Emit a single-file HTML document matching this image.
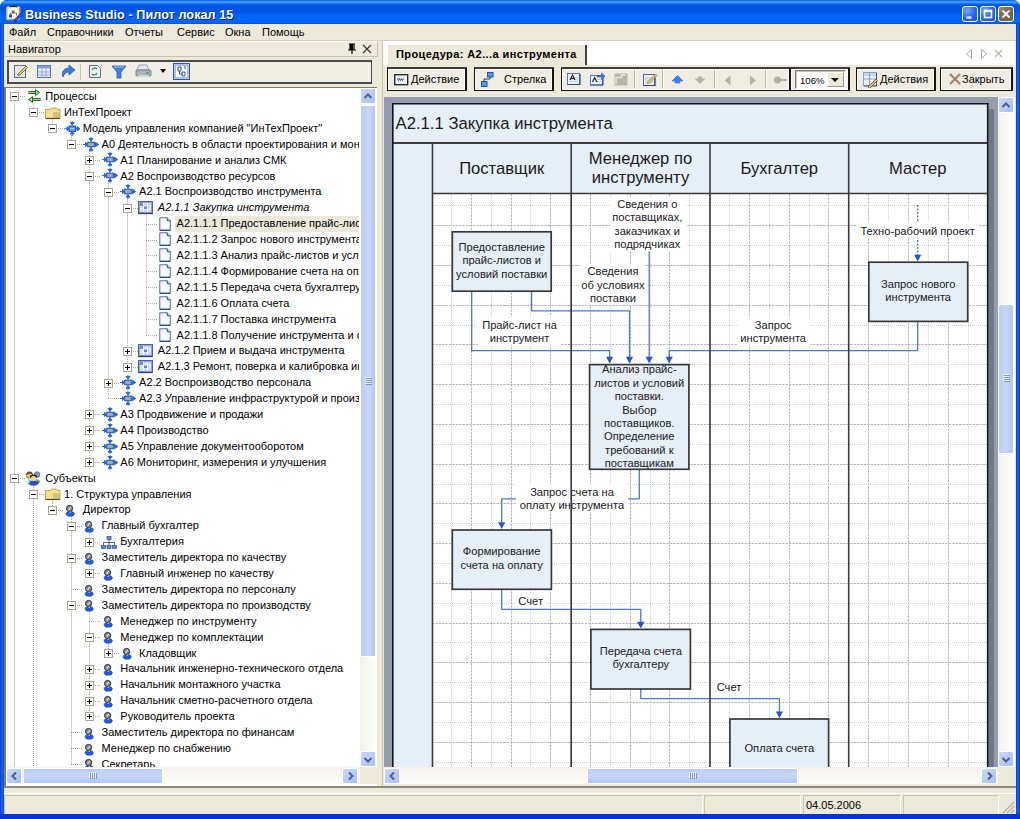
<!DOCTYPE html><html><head><meta charset="utf-8"><style>
*{margin:0;padding:0;box-sizing:border-box}
html,body{width:1020px;height:819px;overflow:hidden;background:#FFFFFF;font-family:"Liberation Sans",sans-serif;font-size:11px;color:#000}
.a{position:absolute}
.t{position:absolute;white-space:nowrap;line-height:13px}
</style></head><body>
<div class="a" style="left:0;top:0;width:1020px;height:819px;background:#0846D8;border-radius:7px 7px 0 0"></div>
<div class="a" style="left:0;top:0;width:1020px;height:25px;border-radius:7px 7px 0 0;background:linear-gradient(#0050E0 0px,#3C96FF 1.2px,#3C96FF 2.8px,#0A62F0 4px,#0054E0 6px,#0056E4 11px,#0062F2 15px,#0068FA 19px,#0066F8 22.5px,#0048D8 24px,#0040C8 25px)"></div>
<div class="t" style="left:25px;top:7.5px;font-size:12.6px;letter-spacing:0.08px;font-weight:bold;color:#fff;line-height:15px;text-shadow:1px 1px 0 #0A1E80">Business Studio - Пилот локал 15</div>
<svg class="a" style="left:5px;top:5px" width="18" height="18"><rect x="2" y="2" width="12.5" height="12.5" rx="1" fill="#FFFDF2" stroke="#E8C868" stroke-width="1.6"/><path d="M14.5 3v11.5H3" stroke="#A88A40" stroke-width=".8" fill="none"/><path d="M4.5 1.5h8" stroke="#303028" stroke-width="1.4"/><path d="M5.5 3h6" stroke="#FFFFFF" stroke-width="1"/><rect x="7" y="5.5" width="2.5" height="2.5" fill="#6A5E48"/><path d="M5.5 10V8h6v2.5" stroke="#6A6A60" fill="none" stroke-width=".9"/><rect x="4" y="9.5" width="3" height="3" fill="#0A4AE8"/><path d="M8.5 17L17 8.5" stroke="#0A2AC8" stroke-width="2.6"/><path d="M9 16.5L16.5 9" stroke="#FFFFFF" stroke-width=".8" stroke-dasharray="1 1"/></svg>
<div class="a" style="left:962px;top:6px;width:16px;height:16px;border:1px solid #fff;border-radius:3px;background:radial-gradient(circle at 30% 25%,#7AA8F8,#2A64F0 55%,#1A50E0)"><svg class="a" style="left:0;top:0" width="14" height="14"><path d="M3.5 10.5h5" stroke="#fff" stroke-width="2.2"/></svg></div>
<div class="a" style="left:980px;top:6px;width:16px;height:16px;border:1px solid #fff;border-radius:3px;background:radial-gradient(circle at 30% 25%,#7AA8F8,#2A64F0 55%,#1A50E0)"><svg class="a" style="left:0;top:0" width="14" height="14"><rect x="3.5" y="3.5" width="7" height="7" fill="none" stroke="#fff" stroke-width="1.6"/><path d="M3.5 4h7" stroke="#fff" stroke-width="2"/></svg></div>
<div class="a" style="left:998px;top:6px;width:16px;height:16px;border:1px solid #fff;border-radius:3px;background:linear-gradient(135deg,#9A8A70,#7A6A55 40%,#6E604C)"><svg class="a" style="left:0;top:0" width="14" height="14"><path d="M3.5 3.5l7 7M10.5 3.5l-7 7" stroke="#fff" stroke-width="2"/></svg></div>
<div class="a" style="left:0;top:24px;width:4px;height:795px;background:linear-gradient(90deg,#0831D9,#166AEE 50%,#0846D8)"></div>
<div class="a" style="left:1016px;top:24px;width:4px;height:795px;background:linear-gradient(90deg,#0846D8,#166AEE 50%,#0831D9)"></div>
<div class="a" style="left:0;top:814px;width:1020px;height:5px;background:#0831D9"></div>
<div class="a" style="left:4px;top:24px;width:1012px;height:790px;background:#ECE9D8"></div>
<div class="t" style="left:9px;top:26px">Файл</div>
<div class="t" style="left:47px;top:26px">Справочники</div>
<div class="t" style="left:125px;top:26px">Отчеты</div>
<div class="t" style="left:177px;top:26px">Сервис</div>
<div class="t" style="left:225px;top:26px">Окна</div>
<div class="t" style="left:262px;top:26px">Помощь</div>
<div class="a" style="left:4px;top:40px;width:1012px;height:1px;background:#D8D2BD"></div>
<div class="a" style="left:4px;top:41px;width:374px;height:16px;background:#EEEBDC;border-top:1px solid #FBFAF5;border-bottom:1px solid #C9C4B0;border-right:1px solid #C9C4B0"></div>
<div class="t" style="left:8px;top:43px">Навигатор</div>
<svg class="a" style="left:346px;top:43px" width="30" height="12" viewBox="0 0 30 12"><path d="M3 1h6M4 1v6M8 1v6M2 7h8M6 7v4M5 1v6" stroke="#000" stroke-width="1.2" fill="none"/><rect x="5" y="1" width="2" height="6" fill="#000"/><path d="M17 2l8 8M25 2l-8 8" stroke="#333" stroke-width="1.1"/></svg>
<div class="a" style="left:7px;top:60px;width:365px;height:24px;border:2px solid #4A4A4A;border-width:2px 1px 2px 2px;background:#F1EFE5"></div>
<div class="a" style="left:80px;top:64px;width:1px;height:16px;background:#C5C2B2"></div>

<svg class="a" style="left:13px;top:63px" width="16" height="16" viewBox="0 0 16 16"><rect x="1.5" y="2.5" width="11" height="12" fill="#E8ECF6" stroke="#5A6E9A"/><path d="M5 11l8-8 1.5 1.5-8 8H5z" fill="#E8C860" stroke="#6A5A20" stroke-width=".8"/></svg>
<svg class="a" style="left:36px;top:64px" width="16" height="16" viewBox="0 0 16 16"><rect x="1.5" y="1.5" width="13" height="12" fill="#EEF2FA" stroke="#4A6CB0"/><rect x="1.5" y="1.5" width="13" height="3" fill="#7C9CDC"/><path d="M1.5 8h13M1.5 11h13M6 4.5v9M10 4.5v9" stroke="#8AA4D8"/></svg>
<svg class="a" style="left:60px;top:63px" width="16" height="16" viewBox="0 0 16 16"><path d="M3 14C1 9 4 5 9 5V2l6 5-6 5V9C6 9 4 11 3 14z" fill="#3C7EE0" stroke="#1E4EA8" stroke-width=".7"/></svg>
<svg class="a" style="left:88px;top:64px" width="14" height="15" viewBox="0 0 14 15"><path d="M1.5 1.5h8l3 3v9h-11z" fill="#EEF0F8" stroke="#5A6A90"/><path d="M4 6a3 3 0 0 1 5-1M9 9a3 3 0 0 1-5 1" stroke="#3A9A3A" stroke-width="1.4" fill="none"/></svg>
<svg class="a" style="left:111px;top:64px" width="16" height="16" viewBox="0 0 16 16"><path d="M1 2h14l-5 6v6H6V8z" fill="#3C80E8" stroke="#2A5CC0" stroke-width=".8"/><path d="M3 3h10" stroke="#A8C8F8"/></svg>
<svg class="a" style="left:135px;top:63px" width="17" height="16" viewBox="0 0 17 16"><path d="M4 2h8l2 5H2z" fill="#E4E8EE" stroke="#8890A0" stroke-width=".8"/><rect x="1" y="7" width="15" height="6" rx="1" fill="#A8B0BC" stroke="#6A7280" stroke-width=".8"/><rect x="3" y="12" width="11" height="2" fill="#D0D4DA"/><path d="M11 10h3" stroke="#40B040" stroke-width="1.5"/></svg>
<svg class="a" style="left:160px;top:69px" width="6" height="4" viewBox="0 0 6 4"><path d="M0 0h6L3 4z" fill="#000"/></svg>
<svg class="a" style="left:173px;top:63px" width="17" height="17" viewBox="0 0 17 17"><rect x="0.5" y="0.5" width="16" height="16" fill="#FFF" stroke="#2A58C8"/><rect x="2" y="2" width="13" height="13" fill="#FFFFFF" stroke="#5A84D8"/><path d="M5 4h3v4H5zM9 9h3v4H9zM6.5 8v3H9M12 3v3" stroke="#2A4EA8" stroke-width="1" fill="none"/></svg>

<div class="a" style="left:4px;top:87px;width:373px;height:700px;background:#fff;border-top:1px solid #857A62;border-left:2px solid #857A62"></div>
<div class="a" style="left:376px;top:88px;width:1px;height:698px;background:#FBFAF4"></div>
<div class="a" style="left:6px;top:88px;width:353px;height:679px;overflow:hidden">
<svg class="a" style="left:-6px;top:-88px" width="360" height="780"><g stroke="#ACA899" stroke-width="1" stroke-dasharray="1 1" fill="none"><path d="M14.5 96.4V770.0"/><path d="M33.5 103.4V112.3"/><path d="M52.5 119.3V128.2"/><path d="M71.5 135.2V144.1"/><path d="M89.5 151.1V462.1"/><path d="M108.5 182.9V398.5"/><path d="M127.5 198.8V366.7"/><path d="M146.5 214.7V334.9"/><path d="M33.5 485.0V770.0"/><path d="M52.5 500.9V509.8"/><path d="M71.5 516.8V764.2"/><path d="M89.5 532.7V541.6"/><path d="M89.5 564.5V573.4"/><path d="M89.5 612.2V716.5"/><path d="M108.5 644.0V652.9"/><path d="M14.0 96.5H25.8"/><path d="M33.0 112.5H44.5"/><path d="M52.0 128.5H63.3"/><path d="M71.0 144.5H82.0"/><path d="M89.0 160.5H100.8"/><path d="M89.0 176.5H100.8"/><path d="M108.0 192.5H119.5"/><path d="M127.0 208.5H138.3"/><path d="M146.0 224.5H157.1"/><path d="M146.0 240.5H157.1"/><path d="M146.0 255.5H157.1"/><path d="M146.0 271.5H157.1"/><path d="M146.0 287.5H157.1"/><path d="M146.0 303.5H157.1"/><path d="M146.0 319.5H157.1"/><path d="M146.0 335.5H157.1"/><path d="M127.0 351.5H138.3"/><path d="M127.0 367.5H138.3"/><path d="M108.0 383.5H119.5"/><path d="M108.0 398.5H119.5"/><path d="M89.0 414.5H100.8"/><path d="M89.0 430.5H100.8"/><path d="M89.0 446.5H100.8"/><path d="M89.0 462.5H100.8"/><path d="M14.0 478.5H25.8"/><path d="M33.0 494.5H44.5"/><path d="M52.0 510.5H63.3"/><path d="M71.0 526.5H82.0"/><path d="M89.0 542.5H100.8"/><path d="M71.0 558.5H82.0"/><path d="M89.0 573.5H100.8"/><path d="M71.0 589.5H82.0"/><path d="M71.0 605.5H82.0"/><path d="M89.0 621.5H100.8"/><path d="M89.0 637.5H100.8"/><path d="M108.0 653.5H119.5"/><path d="M89.0 669.5H100.8"/><path d="M89.0 685.5H100.8"/><path d="M89.0 701.5H100.8"/><path d="M89.0 716.5H100.8"/><path d="M71.0 732.5H82.0"/><path d="M71.0 748.5H82.0"/><path d="M71.0 764.5H82.0"/></g>
<rect x="10.5" y="92.5" width="8" height="8" fill="#fff" stroke="#A9A594"/>
<path d="M12 96.5h5" stroke="#000"/>
<rect x="29.5" y="108.5" width="8" height="8" fill="#fff" stroke="#A9A594"/>
<path d="M31 112.5h5" stroke="#000"/>
<rect x="48.5" y="124.5" width="8" height="8" fill="#fff" stroke="#A9A594"/>
<path d="M50 128.5h5" stroke="#000"/>
<rect x="67.5" y="140.5" width="8" height="8" fill="#fff" stroke="#A9A594"/>
<path d="M69 144.5h5" stroke="#000"/>
<rect x="85.5" y="156.5" width="8" height="8" fill="#fff" stroke="#A9A594"/>
<path d="M87 160.5h5" stroke="#000"/>
<path d="M89.5 158v5" stroke="#000"/>
<rect x="85.5" y="172.5" width="8" height="8" fill="#fff" stroke="#A9A594"/>
<path d="M87 176.5h5" stroke="#000"/>
<rect x="104.5" y="188.5" width="8" height="8" fill="#fff" stroke="#A9A594"/>
<path d="M106 192.5h5" stroke="#000"/>
<rect x="123.5" y="204.5" width="8" height="8" fill="#fff" stroke="#A9A594"/>
<path d="M125 208.5h5" stroke="#000"/>
<rect x="123.5" y="347.5" width="8" height="8" fill="#fff" stroke="#A9A594"/>
<path d="M125 351.5h5" stroke="#000"/>
<path d="M127.5 349v5" stroke="#000"/>
<rect x="123.5" y="363.5" width="8" height="8" fill="#fff" stroke="#A9A594"/>
<path d="M125 367.5h5" stroke="#000"/>
<path d="M127.5 365v5" stroke="#000"/>
<rect x="104.5" y="379.5" width="8" height="8" fill="#fff" stroke="#A9A594"/>
<path d="M106 383.5h5" stroke="#000"/>
<path d="M108.5 381v5" stroke="#000"/>
<rect x="85.5" y="410.5" width="8" height="8" fill="#fff" stroke="#A9A594"/>
<path d="M87 414.5h5" stroke="#000"/>
<path d="M89.5 412v5" stroke="#000"/>
<rect x="85.5" y="426.5" width="8" height="8" fill="#fff" stroke="#A9A594"/>
<path d="M87 430.5h5" stroke="#000"/>
<path d="M89.5 428v5" stroke="#000"/>
<rect x="85.5" y="442.5" width="8" height="8" fill="#fff" stroke="#A9A594"/>
<path d="M87 446.5h5" stroke="#000"/>
<path d="M89.5 444v5" stroke="#000"/>
<rect x="85.5" y="458.5" width="8" height="8" fill="#fff" stroke="#A9A594"/>
<path d="M87 462.5h5" stroke="#000"/>
<path d="M89.5 460v5" stroke="#000"/>
<rect x="10.5" y="474.5" width="8" height="8" fill="#fff" stroke="#A9A594"/>
<path d="M12 478.5h5" stroke="#000"/>
<rect x="29.5" y="490.5" width="8" height="8" fill="#fff" stroke="#A9A594"/>
<path d="M31 494.5h5" stroke="#000"/>
<rect x="48.5" y="506.5" width="8" height="8" fill="#fff" stroke="#A9A594"/>
<path d="M50 510.5h5" stroke="#000"/>
<rect x="67.5" y="522.5" width="8" height="8" fill="#fff" stroke="#A9A594"/>
<path d="M69 526.5h5" stroke="#000"/>
<rect x="85.5" y="538.5" width="8" height="8" fill="#fff" stroke="#A9A594"/>
<path d="M87 542.5h5" stroke="#000"/>
<path d="M89.5 540v5" stroke="#000"/>
<rect x="67.5" y="554.5" width="8" height="8" fill="#fff" stroke="#A9A594"/>
<path d="M69 558.5h5" stroke="#000"/>
<rect x="85.5" y="569.5" width="8" height="8" fill="#fff" stroke="#A9A594"/>
<path d="M87 573.5h5" stroke="#000"/>
<path d="M89.5 571v5" stroke="#000"/>
<rect x="67.5" y="601.5" width="8" height="8" fill="#fff" stroke="#A9A594"/>
<path d="M69 605.5h5" stroke="#000"/>
<rect x="85.5" y="633.5" width="8" height="8" fill="#fff" stroke="#A9A594"/>
<path d="M87 637.5h5" stroke="#000"/>
<rect x="104.5" y="649.5" width="8" height="8" fill="#fff" stroke="#A9A594"/>
<path d="M106 653.5h5" stroke="#000"/>
<path d="M108.5 651v5" stroke="#000"/>
<rect x="85.5" y="665.5" width="8" height="8" fill="#fff" stroke="#A9A594"/>
<path d="M87 669.5h5" stroke="#000"/>
<path d="M89.5 667v5" stroke="#000"/>
<rect x="85.5" y="681.5" width="8" height="8" fill="#fff" stroke="#A9A594"/>
<path d="M87 685.5h5" stroke="#000"/>
<path d="M89.5 683v5" stroke="#000"/>
<rect x="85.5" y="697.5" width="8" height="8" fill="#fff" stroke="#A9A594"/>
<path d="M87 701.5h5" stroke="#000"/>
<path d="M89.5 699v5" stroke="#000"/>
<rect x="85.5" y="712.5" width="8" height="8" fill="#fff" stroke="#A9A594"/>
<path d="M87 716.5h5" stroke="#000"/>
<path d="M89.5 714v5" stroke="#000"/>
<g transform="translate(27,89)"><path d="M1.5 3.5h9" stroke="#1E3A1E" stroke-width="3"/><path d="M1.5 3.5h9" stroke="#7CF07C" stroke-width="1.5"/><path d="M8.5 .5l4 3-4 3z" fill="#7CF07C" stroke="#1E3A1E" stroke-width=".8"/><path d="M4.5 10.5h9" stroke="#1E3A1E" stroke-width="3"/><path d="M4.5 10.5h9" stroke="#7CF07C" stroke-width="1.5"/><path d="M5.5 7.5l-4 3 4 3z" fill="#7CF07C" stroke="#1E3A1E" stroke-width=".8"/></g>
<g transform="translate(45,106)"><path d="M.5 3.5h5l1 -1.5h5l1 1.5h2.5v9H.5z" fill="#F6E08E" stroke="#B89A4A" stroke-width=".9"/><rect x="8" y="6" width="6.5" height="6" fill="#C8B478" opacity=".7"/><path d="M.5 12.5h14.5" stroke="#5A4A20" stroke-width="1.2"/></g>
<g transform="translate(64,121)"><rect x="5" y="5" width="6.5" height="5.5" fill="#5A90E8" stroke="#1A4AB0" stroke-width=".9"/><path d="M6 7.7h4.5" stroke="#C8DCF8"/><path d="M0 7.7h5M3 5.7l2.5 2-2.5 2zM11.5 7.7h2.5M13 5.5l3 2.2-3 2.2zM8.2 0v5M6.2 1.5l2 2.5 2-2.5zM8.2 10.5v4.5M6.2 13l2-2.5 2 2.5z" stroke="#1E6AF0" fill="#1E6AF0" stroke-width="1"/></g>
<g transform="translate(83,137)"><rect x="4.7" y="5.2" width="6.6" height="4.6" fill="#9AAAC4" stroke="#203C80" stroke-width=".9"/><path d="M0 7.5h4.5M2.5 5.5l2.5 2-2.5 2zM11.5 7.5h3M12.5 5.3l3.2 2.2-3.2 2.2zM8 0v5M6 1.5l2 2.5 2-2.5zM8 10v5M6 13.2l2-2.5 2 2.5z" stroke="#1E6AF0" fill="#1E6AF0" stroke-width="1"/></g>
<g transform="translate(102,152)"><rect x="4.7" y="5.2" width="6.6" height="4.6" fill="#9AAAC4" stroke="#203C80" stroke-width=".9"/><path d="M0 7.5h4.5M2.5 5.5l2.5 2-2.5 2zM11.5 7.5h3M12.5 5.3l3.2 2.2-3.2 2.2zM8 0v5M6 1.5l2 2.5 2-2.5zM8 10v5M6 13.2l2-2.5 2 2.5z" stroke="#1E6AF0" fill="#1E6AF0" stroke-width="1"/></g>
<g transform="translate(102,168)"><rect x="4.7" y="5.2" width="6.6" height="4.6" fill="#9AAAC4" stroke="#203C80" stroke-width=".9"/><path d="M0 7.5h4.5M2.5 5.5l2.5 2-2.5 2zM11.5 7.5h3M12.5 5.3l3.2 2.2-3.2 2.2zM8 0v5M6 1.5l2 2.5 2-2.5zM8 10v5M6 13.2l2-2.5 2 2.5z" stroke="#1E6AF0" fill="#1E6AF0" stroke-width="1"/></g>
<g transform="translate(120,184)"><rect x="4.7" y="5.2" width="6.6" height="4.6" fill="#9AAAC4" stroke="#203C80" stroke-width=".9"/><path d="M0 7.5h4.5M2.5 5.5l2.5 2-2.5 2zM11.5 7.5h3M12.5 5.3l3.2 2.2-3.2 2.2zM8 0v5M6 1.5l2 2.5 2-2.5zM8 10v5M6 13.2l2-2.5 2 2.5z" stroke="#1E6AF0" fill="#1E6AF0" stroke-width="1"/></g>
<g transform="translate(138,201)"><rect x=".5" y=".5" width="14" height="12" fill="#8EA6D4" stroke="#4A64A8"/><rect x="2" y="2" width="11" height="9" fill="#C8D6F0"/><path d="M2 5h11M2 8h11M5.5 2v9M9.5 2v9" stroke="#FFFFFF"/><rect x="2" y="2" width="3" height="3" fill="#6A8AD0"/><rect x="6" y="5.5" width="3" height="2.5" fill="#6A8AD0"/><path d="M.5 12.5h14" stroke="#2A3E80" stroke-width="1.3"/></g>
<g transform="translate(159,217)"><path d="M.8 .8h7.5l3 3v9.7H.8z" fill="#F8FAFE" stroke="#4A6CB8" stroke-width="1"/><path d="M8.3 .8v3h3" fill="#C8D4EE" stroke="#2A4A98"/><path d="M.8 13.3h10.5" stroke="#2A4A98" stroke-width="1.4"/></g>
<g transform="translate(159,232)"><path d="M.8 .8h7.5l3 3v9.7H.8z" fill="#F8FAFE" stroke="#4A6CB8" stroke-width="1"/><path d="M8.3 .8v3h3" fill="#C8D4EE" stroke="#2A4A98"/><path d="M.8 13.3h10.5" stroke="#2A4A98" stroke-width="1.4"/></g>
<g transform="translate(159,248)"><path d="M.8 .8h7.5l3 3v9.7H.8z" fill="#F8FAFE" stroke="#4A6CB8" stroke-width="1"/><path d="M8.3 .8v3h3" fill="#C8D4EE" stroke="#2A4A98"/><path d="M.8 13.3h10.5" stroke="#2A4A98" stroke-width="1.4"/></g>
<g transform="translate(159,264)"><path d="M.8 .8h7.5l3 3v9.7H.8z" fill="#F8FAFE" stroke="#4A6CB8" stroke-width="1"/><path d="M8.3 .8v3h3" fill="#C8D4EE" stroke="#2A4A98"/><path d="M.8 13.3h10.5" stroke="#2A4A98" stroke-width="1.4"/></g>
<g transform="translate(159,280)"><path d="M.8 .8h7.5l3 3v9.7H.8z" fill="#F8FAFE" stroke="#4A6CB8" stroke-width="1"/><path d="M8.3 .8v3h3" fill="#C8D4EE" stroke="#2A4A98"/><path d="M.8 13.3h10.5" stroke="#2A4A98" stroke-width="1.4"/></g>
<g transform="translate(159,296)"><path d="M.8 .8h7.5l3 3v9.7H.8z" fill="#F8FAFE" stroke="#4A6CB8" stroke-width="1"/><path d="M8.3 .8v3h3" fill="#C8D4EE" stroke="#2A4A98"/><path d="M.8 13.3h10.5" stroke="#2A4A98" stroke-width="1.4"/></g>
<g transform="translate(159,312)"><path d="M.8 .8h7.5l3 3v9.7H.8z" fill="#F8FAFE" stroke="#4A6CB8" stroke-width="1"/><path d="M8.3 .8v3h3" fill="#C8D4EE" stroke="#2A4A98"/><path d="M.8 13.3h10.5" stroke="#2A4A98" stroke-width="1.4"/></g>
<g transform="translate(159,328)"><path d="M.8 .8h7.5l3 3v9.7H.8z" fill="#F8FAFE" stroke="#4A6CB8" stroke-width="1"/><path d="M8.3 .8v3h3" fill="#C8D4EE" stroke="#2A4A98"/><path d="M.8 13.3h10.5" stroke="#2A4A98" stroke-width="1.4"/></g>
<g transform="translate(138,344)"><rect x=".5" y=".5" width="14" height="12" fill="#8EA6D4" stroke="#4A64A8"/><rect x="2" y="2" width="11" height="9" fill="#C8D6F0"/><path d="M2 5h11M2 8h11M5.5 2v9M9.5 2v9" stroke="#FFFFFF"/><rect x="2" y="2" width="3" height="3" fill="#6A8AD0"/><rect x="6" y="5.5" width="3" height="2.5" fill="#6A8AD0"/><path d="M.5 12.5h14" stroke="#2A3E80" stroke-width="1.3"/></g>
<g transform="translate(138,360)"><rect x=".5" y=".5" width="14" height="12" fill="#8EA6D4" stroke="#4A64A8"/><rect x="2" y="2" width="11" height="9" fill="#C8D6F0"/><path d="M2 5h11M2 8h11M5.5 2v9M9.5 2v9" stroke="#FFFFFF"/><rect x="2" y="2" width="3" height="3" fill="#6A8AD0"/><rect x="6" y="5.5" width="3" height="2.5" fill="#6A8AD0"/><path d="M.5 12.5h14" stroke="#2A3E80" stroke-width="1.3"/></g>
<g transform="translate(120,375)"><rect x="4.7" y="5.2" width="6.6" height="4.6" fill="#9AAAC4" stroke="#203C80" stroke-width=".9"/><path d="M0 7.5h4.5M2.5 5.5l2.5 2-2.5 2zM11.5 7.5h3M12.5 5.3l3.2 2.2-3.2 2.2zM8 0v5M6 1.5l2 2.5 2-2.5zM8 10v5M6 13.2l2-2.5 2 2.5z" stroke="#1E6AF0" fill="#1E6AF0" stroke-width="1"/></g>
<g transform="translate(120,391)"><rect x="4.7" y="5.2" width="6.6" height="4.6" fill="#9AAAC4" stroke="#203C80" stroke-width=".9"/><path d="M0 7.5h4.5M2.5 5.5l2.5 2-2.5 2zM11.5 7.5h3M12.5 5.3l3.2 2.2-3.2 2.2zM8 0v5M6 1.5l2 2.5 2-2.5zM8 10v5M6 13.2l2-2.5 2 2.5z" stroke="#1E6AF0" fill="#1E6AF0" stroke-width="1"/></g>
<g transform="translate(102,407)"><rect x="4.7" y="5.2" width="6.6" height="4.6" fill="#9AAAC4" stroke="#203C80" stroke-width=".9"/><path d="M0 7.5h4.5M2.5 5.5l2.5 2-2.5 2zM11.5 7.5h3M12.5 5.3l3.2 2.2-3.2 2.2zM8 0v5M6 1.5l2 2.5 2-2.5zM8 10v5M6 13.2l2-2.5 2 2.5z" stroke="#1E6AF0" fill="#1E6AF0" stroke-width="1"/></g>
<g transform="translate(102,423)"><rect x="4.7" y="5.2" width="6.6" height="4.6" fill="#9AAAC4" stroke="#203C80" stroke-width=".9"/><path d="M0 7.5h4.5M2.5 5.5l2.5 2-2.5 2zM11.5 7.5h3M12.5 5.3l3.2 2.2-3.2 2.2zM8 0v5M6 1.5l2 2.5 2-2.5zM8 10v5M6 13.2l2-2.5 2 2.5z" stroke="#1E6AF0" fill="#1E6AF0" stroke-width="1"/></g>
<g transform="translate(102,439)"><rect x="4.7" y="5.2" width="6.6" height="4.6" fill="#9AAAC4" stroke="#203C80" stroke-width=".9"/><path d="M0 7.5h4.5M2.5 5.5l2.5 2-2.5 2zM11.5 7.5h3M12.5 5.3l3.2 2.2-3.2 2.2zM8 0v5M6 1.5l2 2.5 2-2.5zM8 10v5M6 13.2l2-2.5 2 2.5z" stroke="#1E6AF0" fill="#1E6AF0" stroke-width="1"/></g>
<g transform="translate(102,455)"><rect x="4.7" y="5.2" width="6.6" height="4.6" fill="#9AAAC4" stroke="#203C80" stroke-width=".9"/><path d="M0 7.5h4.5M2.5 5.5l2.5 2-2.5 2zM11.5 7.5h3M12.5 5.3l3.2 2.2-3.2 2.2zM8 0v5M6 1.5l2 2.5 2-2.5zM8 10v5M6 13.2l2-2.5 2 2.5z" stroke="#1E6AF0" fill="#1E6AF0" stroke-width="1"/></g>
<g transform="translate(25,471)"><circle cx="4.5" cy="4" r="3.3" fill="#E8CC6A" stroke="#6A5A30" stroke-width=".7"/><path d="M2 3.5c.5-2 4-2.5 5-.5" stroke="#4A3A20" stroke-width="1.4" fill="none"/><circle cx="12" cy="3.6" r="2.8" fill="#6A9AE8" stroke="#2A58B8" stroke-width=".7"/><path d="M10.5 7.5l5 2.5-2 3z" fill="#A08A60"/><ellipse cx="8.5" cy="12" rx="4.6" ry="2.3" fill="#1E5AE0" stroke="#0A3AB0" stroke-width=".6"/><circle cx="8.5" cy="7" r="3" fill="#F6DC7A"/><path d="M5.5 6.5c0-3 6-3 6 0" stroke="#2A2418" stroke-width="1.6" fill="none"/><path d="M1.5 10.5l1 1M3.5 9l1 1M2.5 12.5l1 1M4 11l1 1M3 8l.8.8" stroke="#50D040" stroke-width="1"/></g>
<g transform="translate(45,487)"><path d="M.5 3.5h5l1 -1.5h5l1 1.5h2.5v9H.5z" fill="#F6E08E" stroke="#B89A4A" stroke-width=".9"/><rect x="8" y="6" width="6.5" height="6" fill="#C8B478" opacity=".7"/><path d="M.5 12.5h14.5" stroke="#5A4A20" stroke-width="1.2"/></g>
<g transform="translate(66,505)"><ellipse cx="4.2" cy="8.9" rx="4.1" ry="2.3" fill="#1E5AE8" stroke="#1840B0" stroke-width=".6"/><circle cx="3.6" cy="3.5" r="3.1" fill="#7E858C" stroke="#2A2E34" stroke-width="1"/><path d="M2.4 5.2l2.6-3.4" stroke="#E0E4E8" stroke-width="1.1"/><circle cx="4.2" cy="7.2" r=".7" fill="#F0E060"/></g>
<g transform="translate(85,521)"><ellipse cx="4.2" cy="8.9" rx="4.1" ry="2.3" fill="#1E5AE8" stroke="#1840B0" stroke-width=".6"/><circle cx="3.6" cy="3.5" r="3.1" fill="#7E858C" stroke="#2A2E34" stroke-width="1"/><path d="M2.4 5.2l2.6-3.4" stroke="#E0E4E8" stroke-width="1.1"/><circle cx="4.2" cy="7.2" r=".7" fill="#F0E060"/></g>
<g transform="translate(101,536)"><rect x="6" y=".5" width="4" height="3" fill="#5A8AE0" stroke="#2A4A98" stroke-width=".7"/><path d="M8 3.5v3M2.5 6.5h11M2.5 6.5v3M8 6.5v3M13.5 6.5v3" stroke="#3A3E44" stroke-width=".8" fill="none"/><rect x=".5" y="9.5" width="4" height="3" fill="#5A8AE0" stroke="#2A4A98" stroke-width=".7"/><rect x="6" y="9.5" width="4" height="3" fill="#5A8AE0" stroke="#2A4A98" stroke-width=".7"/><rect x="11.5" y="9.5" width="4" height="3" fill="#5A8AE0" stroke="#2A4A98" stroke-width=".7"/></g>
<g transform="translate(85,553)"><ellipse cx="4.2" cy="8.9" rx="4.1" ry="2.3" fill="#1E5AE8" stroke="#1840B0" stroke-width=".6"/><circle cx="3.6" cy="3.5" r="3.1" fill="#7E858C" stroke="#2A2E34" stroke-width="1"/><path d="M2.4 5.2l2.6-3.4" stroke="#E0E4E8" stroke-width="1.1"/><circle cx="4.2" cy="7.2" r=".7" fill="#F0E060"/></g>
<g transform="translate(104,569)"><ellipse cx="4.2" cy="8.9" rx="4.1" ry="2.3" fill="#1E5AE8" stroke="#1840B0" stroke-width=".6"/><circle cx="3.6" cy="3.5" r="3.1" fill="#7E858C" stroke="#2A2E34" stroke-width="1"/><path d="M2.4 5.2l2.6-3.4" stroke="#E0E4E8" stroke-width="1.1"/><circle cx="4.2" cy="7.2" r=".7" fill="#F0E060"/></g>
<g transform="translate(85,585)"><ellipse cx="4.2" cy="8.9" rx="4.1" ry="2.3" fill="#1E5AE8" stroke="#1840B0" stroke-width=".6"/><circle cx="3.6" cy="3.5" r="3.1" fill="#7E858C" stroke="#2A2E34" stroke-width="1"/><path d="M2.4 5.2l2.6-3.4" stroke="#E0E4E8" stroke-width="1.1"/><circle cx="4.2" cy="7.2" r=".7" fill="#F0E060"/></g>
<g transform="translate(85,600)"><ellipse cx="4.2" cy="8.9" rx="4.1" ry="2.3" fill="#1E5AE8" stroke="#1840B0" stroke-width=".6"/><circle cx="3.6" cy="3.5" r="3.1" fill="#7E858C" stroke="#2A2E34" stroke-width="1"/><path d="M2.4 5.2l2.6-3.4" stroke="#E0E4E8" stroke-width="1.1"/><circle cx="4.2" cy="7.2" r=".7" fill="#F0E060"/></g>
<g transform="translate(104,616)"><ellipse cx="4.2" cy="8.9" rx="4.1" ry="2.3" fill="#1E5AE8" stroke="#1840B0" stroke-width=".6"/><circle cx="3.6" cy="3.5" r="3.1" fill="#7E858C" stroke="#2A2E34" stroke-width="1"/><path d="M2.4 5.2l2.6-3.4" stroke="#E0E4E8" stroke-width="1.1"/><circle cx="4.2" cy="7.2" r=".7" fill="#F0E060"/></g>
<g transform="translate(104,632)"><ellipse cx="4.2" cy="8.9" rx="4.1" ry="2.3" fill="#1E5AE8" stroke="#1840B0" stroke-width=".6"/><circle cx="3.6" cy="3.5" r="3.1" fill="#7E858C" stroke="#2A2E34" stroke-width="1"/><path d="M2.4 5.2l2.6-3.4" stroke="#E0E4E8" stroke-width="1.1"/><circle cx="4.2" cy="7.2" r=".7" fill="#F0E060"/></g>
<g transform="translate(123,648)"><ellipse cx="4.2" cy="8.9" rx="4.1" ry="2.3" fill="#1E5AE8" stroke="#1840B0" stroke-width=".6"/><circle cx="3.6" cy="3.5" r="3.1" fill="#7E858C" stroke="#2A2E34" stroke-width="1"/><path d="M2.4 5.2l2.6-3.4" stroke="#E0E4E8" stroke-width="1.1"/><circle cx="4.2" cy="7.2" r=".7" fill="#F0E060"/></g>
<g transform="translate(104,664)"><ellipse cx="4.2" cy="8.9" rx="4.1" ry="2.3" fill="#1E5AE8" stroke="#1840B0" stroke-width=".6"/><circle cx="3.6" cy="3.5" r="3.1" fill="#7E858C" stroke="#2A2E34" stroke-width="1"/><path d="M2.4 5.2l2.6-3.4" stroke="#E0E4E8" stroke-width="1.1"/><circle cx="4.2" cy="7.2" r=".7" fill="#F0E060"/></g>
<g transform="translate(104,680)"><ellipse cx="4.2" cy="8.9" rx="4.1" ry="2.3" fill="#1E5AE8" stroke="#1840B0" stroke-width=".6"/><circle cx="3.6" cy="3.5" r="3.1" fill="#7E858C" stroke="#2A2E34" stroke-width="1"/><path d="M2.4 5.2l2.6-3.4" stroke="#E0E4E8" stroke-width="1.1"/><circle cx="4.2" cy="7.2" r=".7" fill="#F0E060"/></g>
<g transform="translate(104,696)"><ellipse cx="4.2" cy="8.9" rx="4.1" ry="2.3" fill="#1E5AE8" stroke="#1840B0" stroke-width=".6"/><circle cx="3.6" cy="3.5" r="3.1" fill="#7E858C" stroke="#2A2E34" stroke-width="1"/><path d="M2.4 5.2l2.6-3.4" stroke="#E0E4E8" stroke-width="1.1"/><circle cx="4.2" cy="7.2" r=".7" fill="#F0E060"/></g>
<g transform="translate(104,712)"><ellipse cx="4.2" cy="8.9" rx="4.1" ry="2.3" fill="#1E5AE8" stroke="#1840B0" stroke-width=".6"/><circle cx="3.6" cy="3.5" r="3.1" fill="#7E858C" stroke="#2A2E34" stroke-width="1"/><path d="M2.4 5.2l2.6-3.4" stroke="#E0E4E8" stroke-width="1.1"/><circle cx="4.2" cy="7.2" r=".7" fill="#F0E060"/></g>
<g transform="translate(85,728)"><ellipse cx="4.2" cy="8.9" rx="4.1" ry="2.3" fill="#1E5AE8" stroke="#1840B0" stroke-width=".6"/><circle cx="3.6" cy="3.5" r="3.1" fill="#7E858C" stroke="#2A2E34" stroke-width="1"/><path d="M2.4 5.2l2.6-3.4" stroke="#E0E4E8" stroke-width="1.1"/><circle cx="4.2" cy="7.2" r=".7" fill="#F0E060"/></g>
<g transform="translate(85,744)"><ellipse cx="4.2" cy="8.9" rx="4.1" ry="2.3" fill="#1E5AE8" stroke="#1840B0" stroke-width=".6"/><circle cx="3.6" cy="3.5" r="3.1" fill="#7E858C" stroke="#2A2E34" stroke-width="1"/><path d="M2.4 5.2l2.6-3.4" stroke="#E0E4E8" stroke-width="1.1"/><circle cx="4.2" cy="7.2" r=".7" fill="#F0E060"/></g>
<g transform="translate(85,759)"><ellipse cx="4.2" cy="8.9" rx="4.1" ry="2.3" fill="#1E5AE8" stroke="#1840B0" stroke-width=".6"/><circle cx="3.6" cy="3.5" r="3.1" fill="#7E858C" stroke="#2A2E34" stroke-width="1"/><path d="M2.4 5.2l2.6-3.4" stroke="#E0E4E8" stroke-width="1.1"/><circle cx="4.2" cy="7.2" r=".7" fill="#F0E060"/></g>
</svg>
<div class="a" style="left:168.6px;top:127.6px;width:200px;height:16px;background:#EBE8DA"></div>
<div class="t" style="left:39.30px;top:2.00px;">Процессы</div>
<div class="t" style="left:58.05px;top:17.90px;">ИнТехПроект</div>
<div class="t" style="left:76.80px;top:33.80px;">Модель управления компанией &quot;ИнТехПроект&quot;</div>
<div class="t" style="left:95.55px;top:49.70px;">А0 Деятельность в области проектирования и мон</div>
<div class="t" style="left:114.30px;top:65.60px;">А1 Планирование и анализ СМК</div>
<div class="t" style="left:114.30px;top:81.50px;">А2 Воспроизводство ресурсов</div>
<div class="t" style="left:133.05px;top:97.40px;">А2.1 Воспроизводство инструмента</div>
<div class="t" style="left:151.80px;top:113.30px;font-style:italic;">А2.1.1 Закупка инструмента</div>
<div class="t" style="left:170.55px;top:129.20px;">А2.1.1.1 Предоставление прайс-листов и условий поставки</div>
<div class="t" style="left:170.55px;top:145.10px;">А2.1.1.2 Запрос нового инструмента</div>
<div class="t" style="left:170.55px;top:161.00px;">А2.1.1.3 Анализ прайс-листов и условий поставки</div>
<div class="t" style="left:170.55px;top:176.90px;">А2.1.1.4 Формирование счета на оплату</div>
<div class="t" style="left:170.55px;top:192.80px;">А2.1.1.5 Передача счета бухгалтеру</div>
<div class="t" style="left:170.55px;top:208.70px;">А2.1.1.6 Оплата счета</div>
<div class="t" style="left:170.55px;top:224.60px;">А2.1.1.7 Поставка инструмента</div>
<div class="t" style="left:170.55px;top:240.50px;">А2.1.1.8 Получение инструмента и сдача на склад</div>
<div class="t" style="left:151.80px;top:256.40px;">А2.1.2 Прием и выдача инструмента</div>
<div class="t" style="left:151.80px;top:272.30px;">А2.1.3 Ремонт, поверка и калибровка инструмента</div>
<div class="t" style="left:133.05px;top:288.20px;">А2.2 Воспроизводство персонала</div>
<div class="t" style="left:133.05px;top:304.10px;">А2.3 Управление инфраструктурой и производственной средой</div>
<div class="t" style="left:114.30px;top:320.00px;">А3 Продвижение и продажи</div>
<div class="t" style="left:114.30px;top:335.90px;">А4 Производство</div>
<div class="t" style="left:114.30px;top:351.80px;">А5 Управление документооборотом</div>
<div class="t" style="left:114.30px;top:367.70px;">А6 Мониторинг, измерения и улучшения</div>
<div class="t" style="left:39.30px;top:383.60px;">Субъекты</div>
<div class="t" style="left:58.05px;top:399.50px;">1. Структура управления</div>
<div class="t" style="left:76.80px;top:415.40px;">Директор</div>
<div class="t" style="left:95.55px;top:431.30px;">Главный бухгалтер</div>
<div class="t" style="left:114.30px;top:447.20px;">Бухгалтерия</div>
<div class="t" style="left:95.55px;top:463.10px;">Заместитель директора по качеству</div>
<div class="t" style="left:114.30px;top:479.00px;">Главный инженер по качеству</div>
<div class="t" style="left:95.55px;top:494.90px;">Заместитель директора по персоналу</div>
<div class="t" style="left:95.55px;top:510.80px;">Заместитель директора по производству</div>
<div class="t" style="left:114.30px;top:526.70px;">Менеджер по инструменту</div>
<div class="t" style="left:114.30px;top:542.60px;">Менеджер по комплектации</div>
<div class="t" style="left:133.05px;top:558.50px;">Кладовщик</div>
<div class="t" style="left:114.30px;top:574.40px;">Начальник инженерно-технического отдела</div>
<div class="t" style="left:114.30px;top:590.30px;">Начальник монтажного участка</div>
<div class="t" style="left:114.30px;top:606.20px;">Начальник сметно-расчетного отдела</div>
<div class="t" style="left:114.30px;top:622.10px;">Руководитель проекта</div>
<div class="t" style="left:95.55px;top:638.00px;">Заместитель директора по финансам</div>
<div class="t" style="left:95.55px;top:653.90px;">Менеджер по снабжению</div>
<div class="t" style="left:95.55px;top:669.80px;">Секретарь</div>
</div>
<div class="a" style="left:360px;top:88px;width:16px;height:679px;background:linear-gradient(90deg,#F3F1EC,#FEFEFB)"></div>
<div class="a" style="left:360px;top:88px;width:16px;height:16px;border:1px solid #FFFFFF;border-radius:2px;background:linear-gradient(135deg,#C8D8FC,#B4CAF8 60%,#A6BEF4)"><svg class="a" style="left:0;top:0" width="14" height="14" viewBox="0 0 14 14"><path d="M3.5 9l3.5-3.5 3.5 3.5" stroke="#4D6185" stroke-width="2" fill="none"/></svg></div>
<div class="a" style="left:360px;top:105px;width:16px;height:552px;border:1px solid #FFFFFF;border-radius:2px;background:linear-gradient(90deg,#BACCF6,#C6D6FA 50%,#B2C6F4)"></div>
<svg class="a" style="left:365px;top:377px" width="7" height="9"><path d="M0 .5h6M0 2.5h6M0 4.5h6M0 6.5h6" stroke="#EEF4FF"/><path d="M1 1.5h6M1 3.5h6M1 5.5h6M1 7.5h6" stroke="#7C94D0"/></svg>
<div class="a" style="left:360px;top:751px;width:16px;height:16px;border:1px solid #FFFFFF;border-radius:2px;background:linear-gradient(135deg,#C8D8FC,#B4CAF8 60%,#A6BEF4)"><svg class="a" style="left:0;top:0" width="14" height="14" viewBox="0 0 14 14"><path d="M3.5 6l3.5 3.5 3.5-3.5" stroke="#4D6185" stroke-width="2" fill="none"/></svg></div>
<div class="a" style="left:6px;top:767px;width:354px;height:17px;background:linear-gradient(#F3F1EC,#FEFEFB)"></div>
<div class="a" style="left:6px;top:768px;width:16px;height:16px;border:1px solid #FFFFFF;border-radius:2px;background:linear-gradient(135deg,#C8D8FC,#B4CAF8 60%,#A6BEF4)"><svg class="a" style="left:0;top:0" width="14" height="14" viewBox="0 0 14 14"><path d="M9 3.5l-3.5 3.5 3.5 3.5" stroke="#4D6185" stroke-width="2" fill="none"/></svg></div>
<div class="a" style="left:23px;top:768px;width:140px;height:16px;border:1px solid #FFFFFF;border-radius:2px;background:linear-gradient(#BACCF6,#C6D6FA 50%,#B2C6F4)"></div>
<svg class="a" style="left:89px;top:772px" width="9" height="7"><path d="M.5 0v6M2.5 0v6M4.5 0v6M6.5 0v6" stroke="#EEF4FF"/><path d="M1.5 1v6M3.5 1v6M5.5 1v6M7.5 1v6" stroke="#7C94D0"/></svg>
<div class="a" style="left:342px;top:768px;width:16px;height:16px;border:1px solid #FFFFFF;border-radius:2px;background:linear-gradient(135deg,#C8D8FC,#B4CAF8 60%,#A6BEF4)"><svg class="a" style="left:0;top:0" width="14" height="14" viewBox="0 0 14 14"><path d="M6 3.5l3.5 3.5-3.5 3.5" stroke="#4D6185" stroke-width="2" fill="none"/></svg></div>
<div class="a" style="left:360px;top:767px;width:17px;height:17px;background:#ECE9D8"></div>
<div class="a" style="left:378px;top:41px;width:5px;height:746px;background:#ECE9D8"></div>
<div class="a" style="left:382px;top:41px;width:1px;height:746px;background:#C9C4B0"></div>
<div class="a" style="left:383px;top:41px;width:633px;height:24px;background:#FFFFFF;border-left:1px solid #F7F6F0"></div>
<div class="a" style="left:388px;top:45px;width:199px;height:20px;background:#ECE9D8;border-right:2px solid #404040"></div>
<div class="t" style="left:396px;top:48px;font-weight:bold;letter-spacing:0.4px">Процедура: А2...а инструмента</div>
<svg class="a" style="left:963px;top:47px" width="40" height="14"><path d="M8.5 2.5v9l-5-4.5z" fill="none" stroke="#ACA89C"/><path d="M18.5 2.5v9l5-4.5z" fill="none" stroke="#ACA89C"/><path d="M32 3l7 7M39 3l-7 7" stroke="#B4B0A4" stroke-width="1.1"/></svg>
<div class="a" style="left:383px;top:65px;width:633px;height:32px;background:#ECE9D8"></div>
<div class="a" style="left:387px;top:67px;width:80px;height:24px;border:1px solid #141414;border-top:2px solid #3E3E3E;border-right-width:2px;background:#EFEDE3;box-shadow:inset 1px 1px 0 #FCFCF8,inset -1px -1px 0 #FCFCF8"></div>
<div class="a" style="left:474px;top:67px;width:80px;height:24px;border:1px solid #141414;border-top:2px solid #3E3E3E;border-right-width:2px;background:#EFEDE3;box-shadow:inset 1px 1px 0 #FCFCF8,inset -1px -1px 0 #FCFCF8"></div>
<div class="a" style="left:561px;top:67px;width:230px;height:24px;border:1px solid #141414;border-top:2px solid #3E3E3E;border-right-width:2px;background:#EFEDE3;box-shadow:inset 1px 1px 0 #FCFCF8,inset -1px -1px 0 #FCFCF8"></div>
<div class="a" style="left:790px;top:67px;width:60px;height:24px;border:1px solid #141414;border-top:2px solid #3E3E3E;border-right-width:2px;background:#EFEDE3;box-shadow:inset 1px 1px 0 #FCFCF8,inset -1px -1px 0 #FCFCF8"></div>
<div class="a" style="left:856px;top:67px;width:80px;height:24px;border:1px solid #141414;border-top:2px solid #3E3E3E;border-right-width:2px;background:#EFEDE3;box-shadow:inset 1px 1px 0 #FCFCF8,inset -1px -1px 0 #FCFCF8"></div>
<div class="a" style="left:940px;top:67px;width:73px;height:24px;border:1px solid #141414;border-top:2px solid #3E3E3E;border-right-width:2px;background:#EFEDE3;box-shadow:inset 1px 1px 0 #FCFCF8,inset -1px -1px 0 #FCFCF8"></div>
<div class="t" style="left:411px;top:73px">Действие</div>
<div class="t" style="left:504px;top:73px">Стрелка</div>
<div class="t" style="left:880px;top:73px">Действия</div>
<div class="t" style="left:962px;top:73px">Закрыть</div>
<svg class="a" style="left:394px;top:74px" width="15" height="12"><rect x=".7" y=".7" width="13" height="10" fill="#E8EEFA" stroke="#202020" stroke-width="1.3"/><path d="M3.5 4.5l1 2 1-2 1 2 1-2 1 2 1-2" stroke="#404040" fill="none" stroke-width=".9"/></svg>
<svg class="a" style="left:480px;top:71px" width="16" height="17"><rect x="7.5" y="1.5" width="5.5" height="4.5" fill="#5A94F0" stroke="#2050B8"/><rect x="1.5" y="10.5" width="5.5" height="5" fill="#5A94F0" stroke="#2050B8"/><path d="M4 10.5V8h6V6" stroke="#303848" fill="none"/></svg>
<svg class="a" style="left:561px;top:68px" width="230" height="22" viewBox="561 68 230 22"><rect x="567.5" y="73.5" width="12" height="11" fill="#EEF2FA" stroke="#5A78B8"/><path d="M569 77.5h9M569 79.5h9M569 81.5h9" stroke="#C8D2E8"/><path d="M567.5 84.5h12.5M580 74v11" stroke="#2A4A98" stroke-width="1.2"/><path d="M570 80l2.5-5 2.5 5M571 78.5h3" stroke="#202020" stroke-width="1.1" fill="none"/><rect x="590.5" y="75.5" width="12" height="9.5" fill="#EEF2FA" stroke="#5A78B8"/><path d="M592 79.5h9M592 81.5h9" stroke="#C8D2E8"/><path d="M590.5 85h12.5M603 76v9" stroke="#2A4A98" stroke-width="1.2"/><path d="M592.5 82l2.2-4.5 2.2 4.5" stroke="#202020" stroke-width="1.1" fill="none"/><path d="M597 75.5h4.5V73l3.5 3.2-3.5 3.2V77H597z" fill="#3A7AF0" stroke="#1E50C0" stroke-width=".6"/><rect x="614.5" y="73.5" width="13" height="12" fill="#B8B6AA"/><path d="M616 84V77.5h5.5V75H626" stroke="#E4E2D8" stroke-width="1.6" fill="none"/><path d="M634.5 70v18" stroke="#B8B4A4"/><path d="M635.5 70v18" stroke="#FFFFFF"/><rect x="643.5" y="74.5" width="11" height="11" fill="#F0F2F8" stroke="#4A64A8"/><path d="M645 78h8M645 80h8M645 82h8" stroke="#B8C4E0"/><path d="M643.5 85.5h11.5M655 75v11" stroke="#2A3E80" stroke-width="1.2"/><path d="M648 81.5l7.5-7.5 1.5 1.5-7.5 7.5-2 .5z" fill="#E8D070" stroke="#7A6A30" stroke-width=".7"/><path d="M662.5 70v18" stroke="#B8B4A4"/><path d="M663.5 70v18" stroke="#FFFFFF"/><path d="M677.5 75.5l5.5 5.5h-3.2v2h-4.6v-2H672z" fill="#3A82F2" stroke="#1E5AD0" stroke-width=".6"/><path d="M700 84l5.5-5.5h-3.2v-2h-4.6v2H694.5z" fill="#B4B2A6"/><path d="M714.5 70v18" stroke="#B8B4A4"/><path d="M715.5 70v18" stroke="#FFFFFF"/><path d="M730.5 75.5v10l-6-5z" fill="#B4B2A6"/><path d="M750 75.5v10l6-5z" fill="#B4B2A6"/><path d="M765.5 70v18" stroke="#B8B4A4"/><path d="M766.5 70v18" stroke="#FFFFFF"/><path d="M775 80h12" stroke="#B4B2A6" stroke-width="2"/><circle cx="777.5" cy="80" r="3.6" fill="#B4B2A6"/></svg>
<div class="a" style="left:795px;top:70px;width:51px;height:19px;background:#fff;border:1px solid #7F7D70;border-right-color:#FFFFFF;border-bottom-color:#FFFFFF;box-shadow:inset 1px 1px 0 #C8C4B4"></div>
<div class="t" style="left:800px;top:74.5px;font-size:9.6px;line-height:11px">106%</div>
<div class="a" style="left:827px;top:72px;width:17px;height:15px;background:#ECE9D8;border:1px solid #FFFFFF;border-right-color:#9A9888;border-bottom-color:#9A9888"></div>
<svg class="a" style="left:831px;top:78px" width="8" height="4"><path d="M0 0h8L4 4z" fill="#000"/></svg>
<svg class="a" style="left:863px;top:72px" width="16" height="16"><rect x=".5" y=".5" width="13" height="13" fill="#EEF2FC" stroke="#8AA0D0"/><rect x="1" y="1" width="12" height="3" fill="#C8D6F4"/><path d="M.5 7h13M6.5 .5v13" stroke="#8AA0D0"/><path d="M13.5 1v13H1" stroke="#3A4E90" fill="none"/><path d="M5 15l8-8 1.5 1.5-8 8z" fill="#E0C860" stroke="#5A5020" stroke-width=".8"/></svg>
<svg class="a" style="left:948px;top:72px" width="14" height="14"><path d="M2 2l10 10M12 2L2 12" stroke="#A08468" stroke-width="2.2"/></svg>
<div class="a" style="left:384px;top:97px;width:614px;height:670px;background:#939CB0;overflow:hidden"><svg class="a" style="left:0;top:0" width="614" height="670" viewBox="384 97 614 670"><rect x="384" y="97" width="614" height="670" fill="#939CB0"/><rect x="988.5" y="109" width="5.5" height="660" fill="#6E7888"/><rect x="393" y="104" width="595" height="670" fill="#E6EEF8"/><rect x="432" y="194" width="556" height="580" fill="#FFFFFF"/><g stroke-width="1" fill="none"><path d="M451.5 194V770" stroke="#D0D0D0" stroke-dasharray="1 1"/><path d="M471.5 194V770" stroke="#B4B4B4" stroke-dasharray="2.3 1.1"/><path d="M491.5 194V770" stroke="#D0D0D0" stroke-dasharray="1 1"/><path d="M511.5 194V770" stroke="#B4B4B4" stroke-dasharray="2.3 1.1"/><path d="M530.5 194V770" stroke="#D0D0D0" stroke-dasharray="1 1"/><path d="M550.5 194V770" stroke="#B4B4B4" stroke-dasharray="2.3 1.1"/><path d="M570.5 194V770" stroke="#D0D0D0" stroke-dasharray="1 1"/><path d="M590.5 194V770" stroke="#B4B4B4" stroke-dasharray="2.3 1.1"/><path d="M610.5 194V770" stroke="#D0D0D0" stroke-dasharray="1 1"/><path d="M630.5 194V770" stroke="#B4B4B4" stroke-dasharray="2.3 1.1"/><path d="M650.5 194V770" stroke="#D0D0D0" stroke-dasharray="1 1"/><path d="M669.5 194V770" stroke="#B4B4B4" stroke-dasharray="2.3 1.1"/><path d="M689.5 194V770" stroke="#D0D0D0" stroke-dasharray="1 1"/><path d="M709.5 194V770" stroke="#B4B4B4" stroke-dasharray="2.3 1.1"/><path d="M729.5 194V770" stroke="#D0D0D0" stroke-dasharray="1 1"/><path d="M749.5 194V770" stroke="#B4B4B4" stroke-dasharray="2.3 1.1"/><path d="M769.5 194V770" stroke="#D0D0D0" stroke-dasharray="1 1"/><path d="M789.5 194V770" stroke="#B4B4B4" stroke-dasharray="2.3 1.1"/><path d="M809.5 194V770" stroke="#D0D0D0" stroke-dasharray="1 1"/><path d="M828.5 194V770" stroke="#B4B4B4" stroke-dasharray="2.3 1.1"/><path d="M848.5 194V770" stroke="#D0D0D0" stroke-dasharray="1 1"/><path d="M868.5 194V770" stroke="#B4B4B4" stroke-dasharray="2.3 1.1"/><path d="M888.5 194V770" stroke="#D0D0D0" stroke-dasharray="1 1"/><path d="M908.5 194V770" stroke="#B4B4B4" stroke-dasharray="2.3 1.1"/><path d="M928.5 194V770" stroke="#D0D0D0" stroke-dasharray="1 1"/><path d="M948.5 194V770" stroke="#B4B4B4" stroke-dasharray="2.3 1.1"/><path d="M968.5 194V770" stroke="#D0D0D0" stroke-dasharray="1 1"/><path d="M432 205.5H988" stroke="#D0D0D0" stroke-dasharray="1 1"/><path d="M432 225.5H988" stroke="#B4B4B4" stroke-dasharray="2.3 1.1"/><path d="M432 245.5H988" stroke="#D0D0D0" stroke-dasharray="1 1"/><path d="M432 265.5H988" stroke="#B4B4B4" stroke-dasharray="2.3 1.1"/><path d="M432 285.5H988" stroke="#D0D0D0" stroke-dasharray="1 1"/><path d="M432 305.5H988" stroke="#B4B4B4" stroke-dasharray="2.3 1.1"/><path d="M432 325.5H988" stroke="#D0D0D0" stroke-dasharray="1 1"/><path d="M432 344.5H988" stroke="#B4B4B4" stroke-dasharray="2.3 1.1"/><path d="M432 364.5H988" stroke="#D0D0D0" stroke-dasharray="1 1"/><path d="M432 384.5H988" stroke="#B4B4B4" stroke-dasharray="2.3 1.1"/><path d="M432 404.5H988" stroke="#D0D0D0" stroke-dasharray="1 1"/><path d="M432 424.5H988" stroke="#B4B4B4" stroke-dasharray="2.3 1.1"/><path d="M432 444.5H988" stroke="#D0D0D0" stroke-dasharray="1 1"/><path d="M432 464.5H988" stroke="#B4B4B4" stroke-dasharray="2.3 1.1"/><path d="M432 484.5H988" stroke="#D0D0D0" stroke-dasharray="1 1"/><path d="M432 503.5H988" stroke="#B4B4B4" stroke-dasharray="2.3 1.1"/><path d="M432 523.5H988" stroke="#D0D0D0" stroke-dasharray="1 1"/><path d="M432 543.5H988" stroke="#B4B4B4" stroke-dasharray="2.3 1.1"/><path d="M432 563.5H988" stroke="#D0D0D0" stroke-dasharray="1 1"/><path d="M432 583.5H988" stroke="#B4B4B4" stroke-dasharray="2.3 1.1"/><path d="M432 603.5H988" stroke="#D0D0D0" stroke-dasharray="1 1"/><path d="M432 623.5H988" stroke="#B4B4B4" stroke-dasharray="2.3 1.1"/><path d="M432 642.5H988" stroke="#D0D0D0" stroke-dasharray="1 1"/><path d="M432 662.5H988" stroke="#B4B4B4" stroke-dasharray="2.3 1.1"/><path d="M432 682.5H988" stroke="#D0D0D0" stroke-dasharray="1 1"/><path d="M432 702.5H988" stroke="#B4B4B4" stroke-dasharray="2.3 1.1"/><path d="M432 722.5H988" stroke="#D0D0D0" stroke-dasharray="1 1"/><path d="M432 742.5H988" stroke="#B4B4B4" stroke-dasharray="2.3 1.1"/><path d="M432 762.5H988" stroke="#D0D0D0" stroke-dasharray="1 1"/></g><text x="395.5" y="128.5" font-size="16.7" font-family="Liberation Sans" fill="#1A1A1A">А2.1.1 Закупка инструмента</text><g font-size="16.6" font-family="Liberation Sans" fill="#1A1A1A" text-anchor="middle"><text x="501.7" y="173.5">Поставщик</text><text x="640.5" y="163.5">Менеджер по</text><text x="640.5" y="183">инструменту</text><text x="779.3" y="173.5">Бухгалтер</text><text x="917.8" y="173.5">Мастер</text></g><path d="M471.7 291 L471.7 350.7 L609.6 350.7 L609.6 358" stroke="#4A78D8" stroke-width="1.3" fill="none" stroke-linejoin="round"/><path d="M531.6 291 L531.6 310.8 L629.5 310.8 L629.5 358" stroke="#4A78D8" stroke-width="1.3" fill="none" stroke-linejoin="round"/><path d="M649.2 251.5 L649.2 358" stroke="#4A78D8" stroke-width="1.3" fill="none" stroke-linejoin="round"/><path d="M917.7 321 L917.7 350.7 L669.2 350.7 L669.2 358" stroke="#4A78D8" stroke-width="1.3" fill="none" stroke-linejoin="round"/><path d="M917.7 205V256" stroke="#4A78D8" stroke-width="1.3" stroke-dasharray="2 1.5"/><path d="M639.3 469 L639.3 498.8 L501.7 498.8 L501.7 523" stroke="#4A78D8" stroke-width="1.3" fill="none" stroke-linejoin="round"/><path d="M501.7 589 L501.7 609.3 L640.8 609.3 L640.8 622" stroke="#4A78D8" stroke-width="1.3" fill="none" stroke-linejoin="round"/><path d="M640.8 689 L640.8 698.6 L779.4 698.6 L779.4 712" stroke="#4A78D8" stroke-width="1.3" fill="none" stroke-linejoin="round"/><rect x="610" y="197" width="76" height="54" fill="#fff"/><rect x="580" y="264" width="66" height="41" fill="#fff"/><rect x="478" y="317" width="83" height="28" fill="#fff"/><rect x="738" y="317" width="72" height="28" fill="#fff"/><rect x="856" y="222" width="122" height="16" fill="#fff"/><rect x="516" y="484" width="112" height="28" fill="#fff"/><rect x="516" y="594" width="30" height="14" fill="#fff"/><rect x="714" y="680" width="30" height="14" fill="#fff"/><g stroke="#3A3A3A" fill="none"><path d="M393 103.8H988.5" stroke-width="1.6" stroke="#141414"/><path d="M393 143H988" stroke-width="1.8"/><path d="M432 193.5H988" stroke-width="1.6"/><path d="M392.8 103V770M987.7 103V770" stroke-width="1.6" stroke="#141414"/><path d="M432.5 143V770" stroke-width="1.6"/><path d="M571.2 143V770" stroke-width="1.6"/><path d="M710 143V770" stroke-width="1.6"/><path d="M848.7 143V770" stroke-width="1.6"/></g><path d="M606.0 356.8L613.2 356.8L609.6 363.6z" fill="#2456D6"/><path d="M625.9 356.8L633.1 356.8L629.5 363.6z" fill="#2456D6"/><path d="M645.6 356.8L652.8000000000001 356.8L649.2 363.6z" fill="#2456D6"/><path d="M665.6 356.8L672.8000000000001 356.8L669.2 363.6z" fill="#2456D6"/><path d="M914.1 254.7L921.3000000000001 254.7L917.7 261.5z" fill="#2456D6"/><path d="M498.09999999999997 522.2L505.3 522.2L501.7 529z" fill="#2456D6"/><path d="M637.1999999999999 621.7L644.4 621.7L640.8 628.5z" fill="#2456D6"/><path d="M775.8 711.4000000000001L783.0 711.4000000000001L779.4 718.2z" fill="#2456D6"/><g font-size="11.15" font-family="Liberation Sans" fill="#202020" text-anchor="middle"><text x="647.3" y="207.5">Сведения о</text><text x="647.3" y="221.2">поставщиках,</text><text x="647.3" y="234.6">заказчиках и</text><text x="647.3" y="248">подрядчиках</text><text x="613" y="275.3">Сведения</text><text x="613" y="288.7">об условиях</text><text x="613" y="302.1">поставки</text><text x="519.5" y="328.5">Прайс-лист на</text><text x="519.5" y="341.9">инструмент</text><text x="773.2" y="328.5">Запрос</text><text x="773.2" y="341.9">инструмента</text><text x="917.7" y="234.6">Техно-рабочий проект</text><text x="572" y="496">Запрос счета на</text><text x="572" y="509.4">оплату инструмента</text><text x="530.7" y="605">Счет</text><text x="729" y="691.3">Счет</text></g><rect x="452.3" y="231.8" width="98.9" height="59.4" fill="#E6EEF8" stroke="#383838" stroke-width="1.7"/><g font-size="11.15" font-family="Liberation Sans" fill="#202020" text-anchor="middle"><text x="501.7" y="250.8">Предоставление</text><text x="501.7" y="264.2">прайс-листов и</text><text x="501.7" y="277.6">условий поставки</text></g><rect x="868.8" y="262.2" width="98.9" height="59.2" fill="#E6EEF8" stroke="#383838" stroke-width="1.7"/><g font-size="11.15" font-family="Liberation Sans" fill="#202020" text-anchor="middle"><text x="918.2" y="287.8">Запрос нового</text><text x="918.2" y="301.4">инструмента</text></g><rect x="589.6" y="364.6" width="99.3" height="104.7" fill="#E6EEF8" stroke="#383838" stroke-width="1.7"/><g font-size="11.15" font-family="Liberation Sans" fill="#202020" text-anchor="middle"><text x="639.3" y="373.4">Анализ прайс-</text><text x="639.3" y="386.8">листов и условий</text><text x="639.3" y="400.2">поставки.</text><text x="639.3" y="413.6">Выбор</text><text x="639.3" y="427">поставщиков.</text><text x="639.3" y="440.4">Определение</text><text x="639.3" y="453.8">требований к</text><text x="639.3" y="467.2">поставщикам</text></g><rect x="452.3" y="530" width="99.1" height="59.3" fill="#E6EEF8" stroke="#383838" stroke-width="1.7"/><g font-size="11.15" font-family="Liberation Sans" fill="#202020" text-anchor="middle"><text x="501.7" y="555.2">Формирование</text><text x="501.7" y="568.6">счета на оплату</text></g><rect x="590.9" y="629.4" width="99.5" height="59.6" fill="#E6EEF8" stroke="#383838" stroke-width="1.7"/><g font-size="11.15" font-family="Liberation Sans" fill="#202020" text-anchor="middle"><text x="640.8" y="655">Передача счета</text><text x="640.8" y="668.4">бухгалтеру</text></g><rect x="729.9" y="719" width="98.7" height="71.0" fill="#E6EEF8" stroke="#383838" stroke-width="1.7"/><g font-size="11.15" font-family="Liberation Sans" fill="#202020" text-anchor="middle"><text x="779.3" y="751.6">Оплата счета</text></g></svg></div>
<div class="a" style="left:998px;top:97px;width:17px;height:670px;background:linear-gradient(90deg,#F3F1EC,#FEFEFB)"></div>
<div class="a" style="left:998px;top:97px;width:16px;height:16px;border:1px solid #FFFFFF;border-radius:2px;background:linear-gradient(135deg,#C8D8FC,#B4CAF8 60%,#A6BEF4)"><svg class="a" style="left:0;top:0" width="14" height="14" viewBox="0 0 14 14"><path d="M3.5 9l3.5-3.5 3.5 3.5" stroke="#4D6185" stroke-width="2" fill="none"/></svg></div>
<div class="a" style="left:998px;top:304px;width:16px;height:150px;border:1px solid #FFFFFF;border-radius:2px;background:linear-gradient(90deg,#BACCF6,#C6D6FA 50%,#B2C6F4)"></div>
<svg class="a" style="left:1003px;top:374px" width="7" height="9"><path d="M0 .5h6M0 2.5h6M0 4.5h6M0 6.5h6" stroke="#EEF4FF"/><path d="M1 1.5h6M1 3.5h6M1 5.5h6M1 7.5h6" stroke="#7C94D0"/></svg>
<div class="a" style="left:998px;top:751px;width:16px;height:16px;border:1px solid #FFFFFF;border-radius:2px;background:linear-gradient(135deg,#C8D8FC,#B4CAF8 60%,#A6BEF4)"><svg class="a" style="left:0;top:0" width="14" height="14" viewBox="0 0 14 14"><path d="M3.5 6l3.5 3.5 3.5-3.5" stroke="#4D6185" stroke-width="2" fill="none"/></svg></div>
<div class="a" style="left:384px;top:767px;width:614px;height:17px;background:linear-gradient(#F3F1EC,#FEFEFB)"></div>
<div class="a" style="left:384px;top:768px;width:16px;height:16px;border:1px solid #FFFFFF;border-radius:2px;background:linear-gradient(135deg,#C8D8FC,#B4CAF8 60%,#A6BEF4)"><svg class="a" style="left:0;top:0" width="14" height="14" viewBox="0 0 14 14"><path d="M9 3.5l-3.5 3.5 3.5 3.5" stroke="#4D6185" stroke-width="2" fill="none"/></svg></div>
<div class="a" style="left:587px;top:768px;width:211px;height:16px;border:1px solid #FFFFFF;border-radius:2px;background:linear-gradient(#BACCF6,#C6D6FA 50%,#B2C6F4)"></div>
<svg class="a" style="left:689px;top:772px" width="9" height="7"><path d="M.5 0v6M2.5 0v6M4.5 0v6M6.5 0v6" stroke="#EEF4FF"/><path d="M1.5 1v6M3.5 1v6M5.5 1v6M7.5 1v6" stroke="#7C94D0"/></svg>
<div class="a" style="left:981px;top:768px;width:16px;height:16px;border:1px solid #FFFFFF;border-radius:2px;background:linear-gradient(135deg,#C8D8FC,#B4CAF8 60%,#A6BEF4)"><svg class="a" style="left:0;top:0" width="14" height="14" viewBox="0 0 14 14"><path d="M6 3.5l3.5 3.5-3.5 3.5" stroke="#4D6185" stroke-width="2" fill="none"/></svg></div>
<div class="a" style="left:998px;top:767px;width:18px;height:18px;background:#ECE9D8"></div>
<div class="a" style="left:4px;top:786px;width:1012px;height:2px;background:#8E8A78"></div>
<div class="a" style="left:4px;top:788px;width:1012px;height:5px;background:#ECE9D8"></div>
<div class="a" style="left:4px;top:793px;width:1012px;height:1px;background:#FFFFFF"></div>
<div class="a" style="left:4px;top:794px;width:1012px;height:20px;background:#ECE9D8"></div>
<div class="a" style="left:4px;top:795px;width:699px;height:19px;border:1px solid #C9C4B0;border-right-color:#fff;border-bottom:none"></div>
<div class="a" style="left:704px;top:795px;width:97px;height:19px;border:1px solid #C9C4B0;border-right-color:#fff;border-bottom:none"></div>
<div class="a" style="left:803px;top:795px;width:98px;height:19px;border:1px solid #C9C4B0;border-right-color:#fff;border-bottom:none"></div>
<div class="a" style="left:903px;top:795px;width:96px;height:19px;border:1px solid #C9C4B0;border-right-color:#fff;border-bottom:none"></div>
<div class="t" style="left:806px;top:799px">04.05.2006</div>
<svg class="a" style="left:1002px;top:801px" width="13" height="13"><path d="M12 1L1 12M12 5L5 12M12 9L9 12" stroke="#B5B1A0" stroke-width="1.2"/></svg>
</body></html>
